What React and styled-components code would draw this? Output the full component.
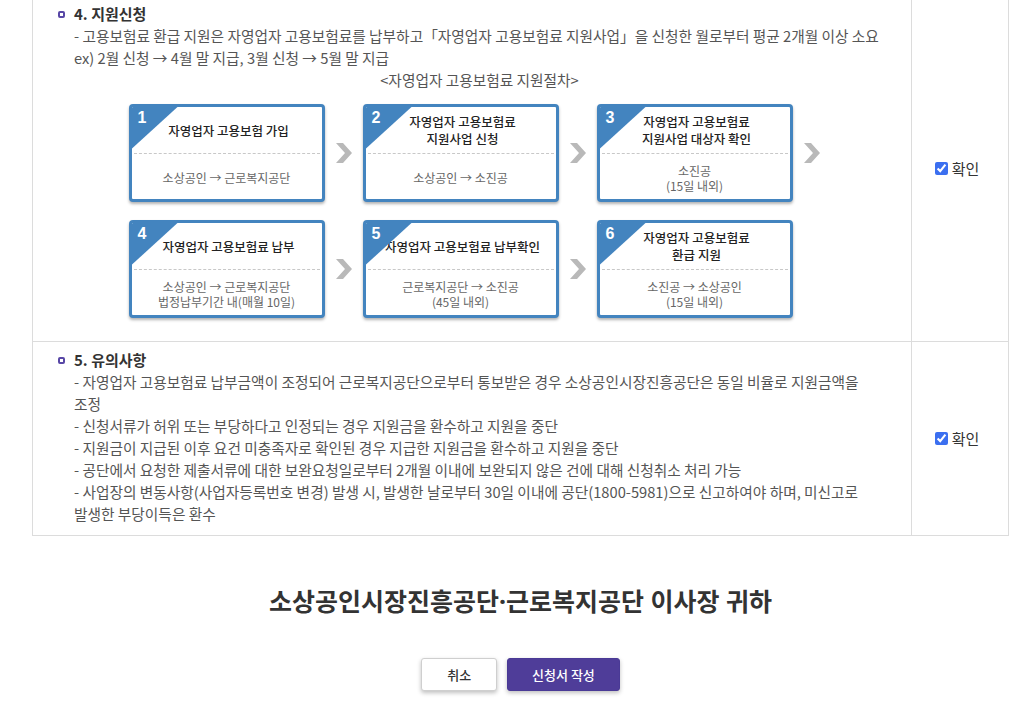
import React from "react";
import styled, { createGlobalStyle } from "styled-components";

const GlobalStyle = createGlobalStyle`
  body {
    margin: 0;
    background: #fff;
    font-family: "Noto Sans CJK KR", "Noto Sans", sans-serif;
    color: #555;
    word-break: keep-all;
  }
`;

const steps = [
  [
    { no: 1, title: ["자영업자 고용보험 가입"], desc: ["소상공인 → 근로복지공단"] },
    { no: 2, title: ["자영업자 고용보험료", "지원사업 신청"], desc: ["소상공인 → 소진공"] },
    { no: 3, title: ["자영업자 고용보험료", "지원사업 대상자 확인"], desc: ["소진공", "(15일 내외)"] },
  ],
  [
    { no: 4, title: ["자영업자 고용보험료 납부"], desc: ["소상공인 → 근로복지공단", "법정납부기간 내(매월 10일)"] },
    { no: 5, title: ["자영업자 고용보험료 납부확인"], desc: ["근로복지공단 → 소진공", "(45일 내외)"] },
    { no: 6, title: ["자영업자 고용보험료", "환급 지원"], desc: ["소진공 → 소상공인", "(15일 내외)"] },
  ],
];

const notices = [
  "- 자영업자 고용보험료 납부금액이 조정되어 근로복지공단으로부터 통보받은 경우 소상공인시장진흥공단은 동일 비율로 지원금액을 조정",
  "- 신청서류가 허위 또는 부당하다고 인정되는 경우 지원금을 환수하고 지원을 중단",
  "- 지원금이 지급된 이후 요건 미충족자로 확인된 경우 지급한 지원금을 환수하고 지원을 중단",
  "- 공단에서 요청한 제출서류에 대한 보완요청일로부터 2개월 이내에 보완되지 않은 건에 대해 신청취소 처리 가능",
  "- 사업장의 변동사항(사업자등록번호 변경) 발생 시, 발생한 날로부터 30일 이내에 공단(1800-5981)으로 신고하여야 하며, 미신고로 발생한 부당이득은 환수",
];

const Arrow = () => (
  <svg width="18" height="20" viewBox="0 0 18 20">
    <path d="M1 0 H8 L17 10 L8 20 H1 L10 10 Z" fill="#b9b9b9" />
  </svg>
);

const App = () => {
  return (
    <Page>
      <GlobalStyle />
      <Table>
        <Row>
          <Content pt={8} pb={23}>
            <Heading>4. 지원신청</Heading>
            <Line>
              - 고용보험료 환급 지원은 자영업자 고용보험료를 납부하고「자영업자 고용보험료 지원사업」을 신청한 월로부터 평균 2개월 이상 소요
            </Line>
            <Line>ex) 2월 신청 → 4월 말 지급, 3월 신청 → 5월 말 지급</Line>
            <Caption>&lt;자영업자 고용보험료 지원절차&gt;</Caption>
            <Flow>
              {steps.map((row, ri) => (
                <FlowRow key={ri}>
                  {row.map((s, i) => (
                    <React.Fragment key={s.no}>
                      <Card>
                        <Corner>
                          <Num>{s.no}</Num>
                        </Corner>
                        <CardTitle>
                          {s.title.map((t) => (
                            <div key={t}>{t}</div>
                          ))}
                        </CardTitle>
                        <CardDesc>
                          {s.desc.map((t) => (
                            <div key={t}>{t}</div>
                          ))}
                        </CardDesc>
                      </Card>
                      <ArrowSlot>{(i < 2 || ri === 0) && <Arrow />}</ArrowSlot>
                    </React.Fragment>
                  ))}
                </FlowRow>
              ))}
            </Flow>
          </Content>
          <Check>
            <input type="checkbox" defaultChecked />
            <span>확인</span>
          </Check>
        </Row>
        <Row>
          <Content pt={7} pb={10}>
            <Heading>5. 유의사항</Heading>
            {notices.map((n) => (
              <Line key={n}>{n}</Line>
            ))}
          </Content>
          <Check>
            <input type="checkbox" defaultChecked />
            <span>확인</span>
          </Check>
        </Row>
      </Table>
      <Addressee>소상공인시장진흥공단·근로복지공단 이사장 귀하</Addressee>
      <Buttons>
        <Button>취소</Button>
        <Button primary>신청서 작성</Button>
      </Buttons>
    </Page>
  );
};

const Page = styled.div`
  width: 977px;
  margin: -6px 0 0 32px;
  padding-bottom: 30px;
`;

const Table = styled.div`
  border: 1px solid #dcdcdc;
`;

const Row = styled.div`
  display: grid;
  grid-template-columns: 1fr 97px;
  & + & {
    border-top: 1px solid #dcdcdc;
  }
`;

const Content = styled.div`
  padding: ${(p) => p.pt}px 26px ${(p) => p.pb}px 41px;
  font-size: 14.7px;
  line-height: 22px;
  color: #555;
`;

const Heading = styled.div`
  position: relative;
  font-size: 15px;
  font-weight: 700;
  color: #333;
  &::before {
    content: "";
    position: absolute;
    left: -16px;
    top: 8px;
    width: 3px;
    height: 3px;
    border: 2px solid #5847a6;
    border-radius: 2px;
    background: #fff;
  }
`;

const Line = styled.div``;

const Caption = styled.div`
  text-align: center;
`;

const Flow = styled.div`
  display: flex;
  flex-direction: column;
  gap: 18px;
  margin-top: 13px;
`;

const FlowRow = styled.div`
  display: flex;
  justify-content: center;
`;

const Card = styled.div`
  position: relative;
  width: 196px;
  height: 98px;
  box-sizing: border-box;
  border: 3px solid #4384bf;
  border-radius: 4px;
  background: #fff;
  box-shadow: 0 2px 3px rgba(0, 0, 0, 0.3);
  overflow: hidden;
  display: flex;
  flex-direction: column;
`;

const Corner = styled.div`
  position: absolute;
  left: 0;
  top: 0;
  width: 46px;
  height: 42px;
  background: #4384bf;
  clip-path: polygon(0 0, 100% 0, 0 100%);
`;

const Num = styled.span`
  position: absolute;
  left: 6px;
  top: 0;
  font-family: "Liberation Sans", Arial, sans-serif;
  font-weight: 700;
  font-size: 16px;
  line-height: 22px;
  color: #fff;
`;

const CardTitle = styled.div`
  height: 46px;
  display: flex;
  flex-direction: column;
  justify-content: center;
  align-items: center;
  padding-left: 4px;
  font-size: 12.5px;
  line-height: 17px;
  font-weight: 500;
  color: #222;
  border-bottom: 1px dashed #c8c8c8;
  margin: 0 2px;
`;

const CardDesc = styled.div`
  flex: 1;
  display: flex;
  flex-direction: column;
  justify-content: center;
  align-items: center;
  padding-top: 2px;
  font-size: 12px;
  line-height: 15px;
  color: #666;
`;

const ArrowSlot = styled.div`
  width: 38px;
  display: flex;
  align-items: center;
  justify-content: center;
`;

const Check = styled.div`
  border-left: 1px solid #dcdcdc;
  display: flex;
  align-items: center;
  justify-content: center;
  gap: 4px;
  padding-right: 6px;
  font-size: 15px;
  color: #333;
  input {
    margin: 0;
    width: 13px;
    height: 13px;
    accent-color: #3b6ff0;
  }
`;

const Addressee = styled.h2`
  margin: 48px 0 0;
  text-align: center;
  font-family: "Noto Sans", "Noto Sans CJK KR", sans-serif;
  font-size: 25px;
  line-height: 34px;
  font-weight: 700;
  color: #333;
`;

const Buttons = styled.div`
  display: flex;
  justify-content: center;
  gap: 10px;
  margin-top: 40px;
`;

const Button = styled.button`
  height: 33px;
  padding: 0 ${(p) => (p.primary ? 24 : 25)}px;
  border-radius: 3px;
  border: 1px solid ${(p) => (p.primary ? "#4a3a96" : "#cfcfcf")};
  background: ${(p) => (p.primary ? "#4f3d99" : "#fff")};
  color: ${(p) => (p.primary ? "#fff" : "#333")};
  font-family: "Noto Sans CJK KR", sans-serif;
  font-size: 13px;
  font-weight: 500;
  box-shadow: 0 2px 4px rgba(0, 0, 0, 0.25);
  cursor: pointer;
`;

export default App;
